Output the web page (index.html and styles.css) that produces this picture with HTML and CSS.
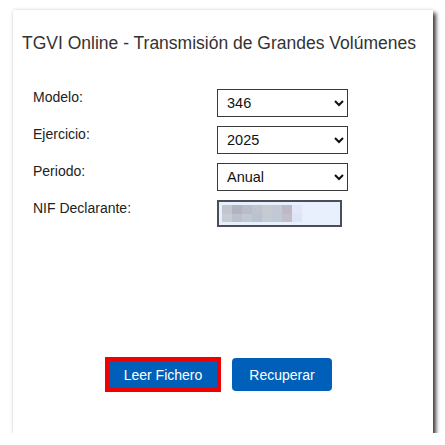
FILE: index.html
```html
<!DOCTYPE html>
<html lang="es">
<head>
<meta charset="utf-8">
<title>TGVI Online</title>
<link rel="stylesheet" href="styles.css">
</head>
<body>
<div class="card">
  <h1 class="title">TGVI Online - Transmisión de Grandes Volúmenes</h1>
  <div class="form">
    <label class="lbl">Modelo:</label>
    <select class="sel"><option>346</option></select>
    <label class="lbl">Ejercicio:</label>
    <select class="sel"><option>2025</option></select>
    <label class="lbl">Periodo:</label>
    <select class="sel"><option>Anual</option></select>
    <label class="lbl">NIF Declarante:</label>
    <div class="nif">
      <div class="mosaic">
        <span></span><span></span><span></span><span></span><span></span><span></span><span></span><span></span>
        <span></span><span></span><span></span><span></span><span></span><span></span><span></span><span></span>
      </div>
    </div>
  </div>
  <div class="actions">
    <button class="btn btn-focus">Leer Fichero</button>
    <button class="btn">Recuperar</button>
  </div>
</div>
</body>
</html>
```
FILE: styles.css
```css
html, body {
  margin: 0;
  padding: 0;
  background: #ffffff;
}
body {
  font-family: "Liberation Sans", Arial, sans-serif;
  color: #222;
}
.card {
  box-sizing: border-box;
  margin: 10px 0 0 13px;
  width: 420px;
  height: 423px;
  background: #fff;
  box-shadow: 3px 3px 4px rgba(0, 0, 0, 0.75), 0 0 3px rgba(0, 0, 0, 0.15);
  padding: 23px 0 0 9px;
  display: flex;
  flex-direction: column;
}
.title {
  margin: 0;
  font-size: 17.5px;
  line-height: 20px;
  font-weight: normal;
  color: #333;
  white-space: nowrap;
}
.form {
  margin: 36px 0 0 11px;
  display: grid;
  grid-template-columns: 184px auto;
  row-gap: 9px;
  align-items: start;
}
.lbl {
  font-size: 14px;
  line-height: 16px;
  color: #222;
}
.sel {
  box-sizing: border-box;
  width: 131px;
  height: 28px;
  border: 1px solid #3a3a3a;
  border-radius: 0;
  background: #fff;
  font-family: "Liberation Sans", Arial, sans-serif;
  font-size: 14.5px;
  color: #111;
  padding: 0 2px 0 5px;
}
.nif {
  box-sizing: border-box;
  width: 125px;
  height: 27px;
  border: 2px solid #4a4e58;
  background: #e8f0fe;
  padding: 3px 0 0 3px;
}
.mosaic {
  display: grid;
  grid-template-columns: repeat(8, 10px);
  grid-template-rows: 9px 8px;
}
.mosaic span:nth-child(1) { background: #c3c5cc; }
.mosaic span:nth-child(2) { background: #b1b3c2; }
.mosaic span:nth-child(3) { background: #b9bdc8; }
.mosaic span:nth-child(4) { background: #bfc3cf; }
.mosaic span:nth-child(5) { background: #c5c9d0; }
.mosaic span:nth-child(6) { background: #c2c8d6; }
.mosaic span:nth-child(7) { background: #bdb9c9; }
.mosaic span:nth-child(8) { background: #e1e7f6; }
.mosaic span:nth-child(9) { background: #c7cbd4; }
.mosaic span:nth-child(10) { background: #bcc1cd; }
.mosaic span:nth-child(11) { background: #c3c7d2; }
.mosaic span:nth-child(12) { background: #b8c3cc; }
.mosaic span:nth-child(13) { background: #c5cbd3; }
.mosaic span:nth-child(14) { background: #c1c9d7; }
.mosaic span:nth-child(15) { background: #c3bfca; }
.mosaic span:nth-child(16) { background: #dde4f5; }
.actions {
  margin-top: auto;
  margin-bottom: 41px;
  padding-left: 83px;
  display: flex;
  align-items: center;
  gap: 11px;
}
.btn {
  box-sizing: border-box;
  height: 33px;
  width: 100px;
  border: none;
  border-radius: 4px;
  background: #005fb8;
  color: #fff;
  font-family: "Liberation Sans", Arial, sans-serif;
  font-size: 14px;
  padding: 0;
  cursor: pointer;
}
.btn-focus {
  width: 116px;
  height: 35px;
  border: 4px solid #f00000;
  border-radius: 0;
}
```
